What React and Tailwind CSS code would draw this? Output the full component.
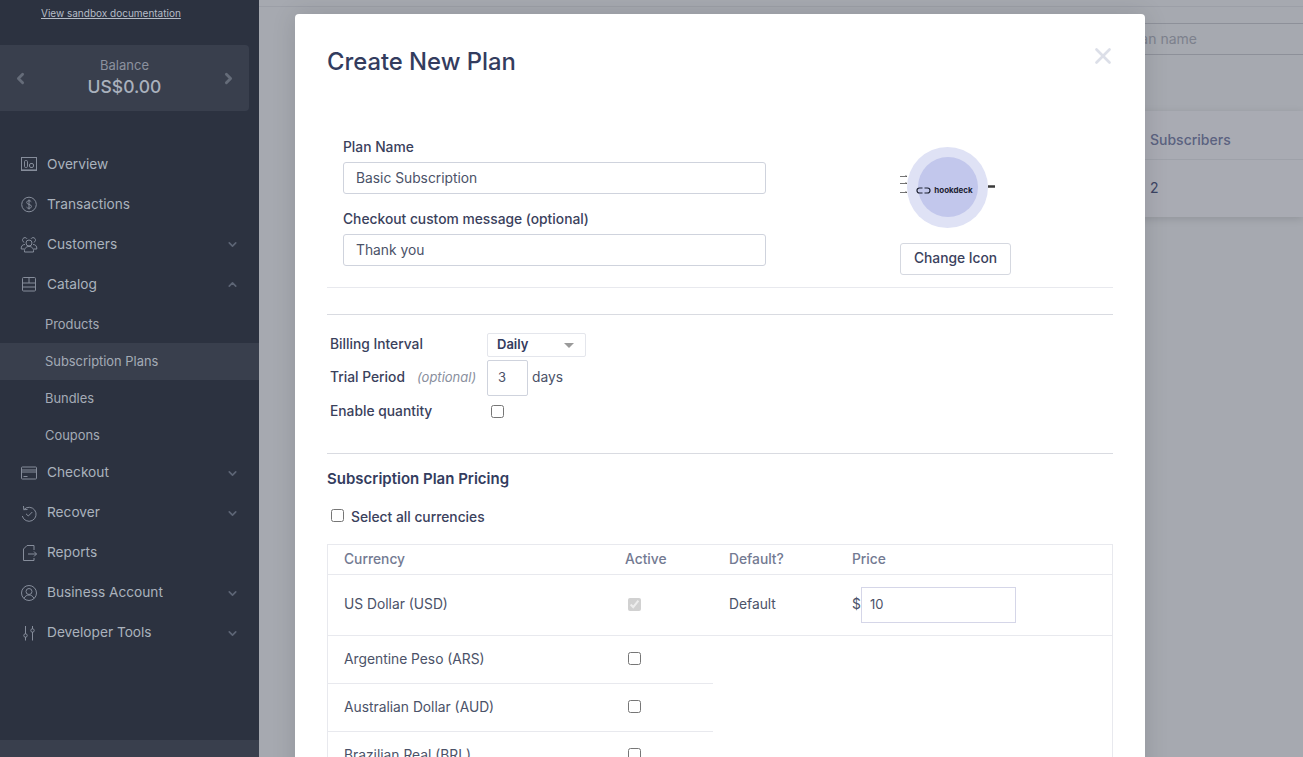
import React from "react";
import { ChevronDown, ChevronUp, ChevronLeft, ChevronRight, X } from "lucide-react";

const iconProps = { width: 18, height: 18, viewBox: "0 0 18 18", fill: "none", stroke: "currentColor", strokeWidth: 1 };

const OverviewIcon = () => (
  <svg {...iconProps}>
    <rect x="1.500" y="2.500" width="15" height="13" />
    <rect x="4.500" y="5.500" width="3" height="7" rx="1.200" />
    <rect x="9.500" y="8.500" width="4" height="4" rx="1.500" />
    <path d="M2 14.500h14" strokeWidth="0.600" />
  </svg>
);
const DollarIcon = () => (
  <svg {...iconProps}>
    <circle cx="9" cy="9.500" r="7.300" />
    <path d="M11.300 6.800C10.800 6 10 5.700 9 5.700c-1.300 0-2.300.7-2.300 1.800 0 2.500 4.700 1.300 4.700 3.900 0 1.100-1 1.900-2.400 1.900-1 0-2-.4-2.500-1.200M9 4.500v10" />
  </svg>
);
const CustomersIcon = () => (
  <svg {...iconProps}>
    <circle cx="9" cy="8" r="3" />
    <path d="M4.500 17c-.5-3.500 1.500-5.500 4.500-5.500s5 2 4.500 5.500z" />
    <path d="M7 3.800a2.400 2.400 0 1 0-2.800 3.500M11 3.800a2.400 2.400 0 1 1 2.800 3.500" />
    <path d="M5 9.500c-2.500 0-4 1.500-3.800 4.500H4M13 9.500c2.500 0 4 1.500 3.800 4.500H14" />
  </svg>
);
const CatalogIcon = () => (
  <svg {...iconProps}>
    <rect x="2.500" y="2.500" width="13" height="13.500" rx="1" />
    <path d="M2.500 8h13M2.500 12h13M9 2.500V8" />
  </svg>
);
const CheckoutIcon = () => (
  <svg {...iconProps}>
    <rect x="1.500" y="3" width="15" height="12" rx="0.800" />
    <path d="M1.500 6h15M1.500 8h15" />
    <path d="M3.500 12.500h4" />
  </svg>
);
const RecoverIcon = () => (
  <svg {...iconProps}>
    <path d="M3.500 2l.3 3.700 3.700-.2" />
    <path d="M3.800 5.700A7 7 0 1 1 2.300 12" />
    <path d="M6 9.800l2.300 2.200 4-4" />
  </svg>
);
const ReportsIcon = () => (
  <svg {...iconProps}>
    <path d="M14 6V1.500H7L3.500 5V16.500H14V14" />
    <path d="M8 10h8.500M14 7.500l2.500 2.500-2.500 2.500" />
  </svg>
);
const AccountIcon = () => (
  <svg {...iconProps}>
    <circle cx="9" cy="9" r="7.500" />
    <circle cx="9" cy="7.500" r="3" />
    <path d="M4 14.500c1-2.500 3-3.500 5-3.500s4 1 5 3.500" />
  </svg>
);
const ToolsIcon = () => (
  <svg {...iconProps}>
    <path d="M5.500 2v8M5.500 13v3.500M12.500 2v3M12.500 8v8.500" />
    <circle cx="5.500" cy="11.500" r="1.700" />
    <circle cx="12.500" cy="6.500" r="1.700" />
  </svg>
);

const navTop = [
  { label: "Overview", icon: <OverviewIcon /> },
  { label: "Transactions", icon: <DollarIcon /> },
  { label: "Customers", icon: <CustomersIcon />, caret: "down" },
  { label: "Catalog", icon: <CatalogIcon />, caret: "up" },
];
const navSub = ["Products", "Subscription Plans", "Bundles", "Coupons"];
const navBottom = [
  { label: "Checkout", icon: <CheckoutIcon />, caret: "down" },
  { label: "Recover", icon: <RecoverIcon />, caret: "down" },
  { label: "Reports", icon: <ReportsIcon /> },
  { label: "Business Account", icon: <AccountIcon />, caret: "down" },
  { label: "Developer Tools", icon: <ToolsIcon />, caret: "down" },
];

function NavItem({ item, nudge }) {
  return (
    <div className="flex items-center h-10 pl-[20px] pr-[20px] text-[13.700px] text-[#aab2bd]">
      <span className="w-[27px] text-[#868d9b] flex items-center">{item.icon}</span>
      <span className={"flex-1 " + (nudge ? "-mt-[1px]" : "")}>{item.label}</span>
      {item.caret === "down" && <ChevronDown size={13} strokeWidth={3} className="text-[#5d6575]" />}
      {item.caret === "up" && <ChevronUp size={13} strokeWidth={3} className="text-[#5d6575]" />}
    </div>
  );
}

function Sidebar() {
  return (
    <aside className="w-[259px] shrink-0 h-full bg-[#2c3240] flex flex-col relative">
      <div className="h-[45px] pl-[41px] pt-[7px] text-[10px] leading-[13px] text-[#b5bcc6]">
        <span className="underline">View sandbox documentation</span>
      </div>
      <div className="w-[249px] h-[66px] bg-[#393f4d] rounded-r flex items-center justify-between pl-[12px] pr-[12px] shrink-0">
        <ChevronLeft size={17} strokeWidth={4} className="text-[#656c79]" />
        <div className="text-center pt-[2px]">
          <div className="text-[13px] leading-[16px] text-[#8b919e]">Balance</div>
          <div className="text-[17.500px] leading-[28px] font-medium text-[#a9b1bd]">US$0.00</div>
        </div>
        <ChevronRight size={17} strokeWidth={4} className="text-[#656c79]" />
      </div>
      <nav className="mt-[33px]">
        {navTop.map((item) => (
          <NavItem key={item.label} item={item} />
        ))}
        <div className="pt-[2px]">
          {navSub.map((label, i) => (
            <div
              key={label}
              className={
                "h-[37px] flex items-center pl-[45px] text-[12.900px] text-[#a4abb6] " +
                (i === 1 ? "bg-[#393f4d]" : "")
              }
            >
              {label}
            </div>
          ))}
        </div>
        <div className="-mt-[1px]">
          {navBottom.map((item) => (
            <NavItem key={item.label} item={item} nudge />
          ))}
        </div>
      </nav>
      <div className="absolute left-0 right-0 bottom-0 h-[17px] bg-[#393f4d]" />
    </aside>
  );
}

function Backdrop() {
  return (
    <div className="flex-1 h-full bg-[#a6a9b0] relative overflow-hidden">
      <div className="h-[7px] border-b border-[#9c9fa7]" />
      <div className="mt-[16px] ml-[780px] h-[32px] border-y border-[#8d9099] flex items-center pl-[89px] pb-[2px] text-[14px] text-[#7d818d]">
        Plan name
      </div>
      <div className="mt-[56px] ml-[780px] h-[106px] bg-[#a9abb3] shadow-[0_2px_8px_rgba(0,0,0,0.12)] text-[14px]">
        <div className="h-[49px] border-b border-[#9ea1a9] pl-[111px] pt-[8px] flex items-center font-medium text-[#5b6280]">
          Subscribers
        </div>
        <div className="h-[56px] pl-[111px] pb-[1px] flex items-center text-[#3c4463]">2</div>
      </div>
    </div>
  );
}

const labelCls = "text-[13.800px] font-medium text-[#3a415c]";
const inputCls = "h-[32px] w-[423px] border border-[#cfd3dd] rounded-[3px] pl-[12px] text-[13.800px] text-[#4b5268] outline-none block";

function HookdeckBadge() {
  return (
    <div className="relative w-[100px] h-[84px] flex items-center justify-center">
      <div className="w-[81px] h-[81px] rounded-full bg-[#dfe2f5] flex items-center justify-center">
        <div className="w-[60px] h-[60px] rounded-full bg-[#c2c7ec] flex items-center justify-center gap-[3px] pr-[6px] pt-[6px]">
          <svg width="15" height="7" viewBox="0 0 15 7" fill="none" stroke="#1d2233" strokeWidth="1.200" className="shrink-0">
            <path d="M6.500 1H3.500a2.500 2.500 0 0 0 0 5H6.500M8.500 1h3a2.500 2.500 0 0 1 0 5h-3" />
          </svg>
          <span className="text-[8px] leading-none font-bold text-[#1d2233]">hookdeck</span>
        </div>
      </div>
      <svg className="absolute left-[2px] top-0" width="100" height="84" viewBox="0 0 100 84" fill="none" stroke="#3a3a3a" strokeWidth="0.700">
        <path d="M0 31.500h7l-1.500-1M0 38.500h7l-1.500-1M0 47.500h7l-1.500-1" />
        <path d="M88 41.500h7" strokeWidth="2.500" />
      </svg>
    </div>
  );
}

function PlanModal() {
  const rows = ["Argentine Peso (ARS)", "Australian Dollar (AUD)", "Brazilian Real (BRL)"];
  return (
    <div className="absolute inset-0 overflow-hidden pl-[295px] pt-[14px]">
      <div className="w-[850px] bg-white rounded-t-[4px] shadow-[0_0_24px_rgba(0,0,0,0.12)] px-[32px] pb-8 relative">
        <h2 className="h-[94px] pt-[32px] text-[23.800px] leading-[32px] font-medium text-[#333c5e]">Create New Plan</h2>
        <X size={26} strokeWidth={2.500} className="absolute right-[29px] top-[29px] text-[#dcdfe8]" />

        <div className="flex h-[180px] border-b border-[#e8e9ee]">
          <div className="pl-[16px] pt-[30px]">
            <div className={labelCls + " h-[24px] leading-[18px]"}>Plan Name</div>
            <input className={inputCls} defaultValue="Basic Subscription" />
            <div className={labelCls + " mt-[16px] h-[24px] leading-[18px]"}>Checkout custom message (optional)</div>
            <input className={inputCls} defaultValue="Thank you" />
          </div>
          <div className="ml-[134px] pt-[37px] flex flex-col items-center">
            <div className="-ml-[16px]">
              <HookdeckBadge />
            </div>
            <button className="mt-[14px] w-[111px] h-[32px] border border-[#d5d8e0] rounded-[3px] pb-[1px] text-[13.800px] font-medium text-[#3a415c]">
              Change Icon
            </button>
          </div>
        </div>

        <div className="h-[139px] mt-[26px] border-t border-[#d9dbe1] pl-[3px] pt-[18px]">
          <div className="flex items-center h-[24px]">
            <span className={labelCls + " w-[157px] -mt-[1px]"}>Billing Interval</span>
            <div className="w-[99px] h-[24px] border border-[#e4e6ec] rounded-[2px] flex items-center justify-between pl-[9px] pr-[11px] text-[13px] font-semibold text-[#333c5e]">
              Daily
              <span className="w-0 h-0 border-x-[5px] border-x-transparent border-t-[5px] border-t-[#9a9a9a]" />
            </div>
          </div>
          <div className="flex items-center h-[36px] mt-[3px]">
            <span className={labelCls + " w-[87px] -mt-[1px]"}>Trial Period</span>
            <span className="w-[70px] -mt-[1px] text-[13px] italic text-[#8a8f9e]">(optional)</span>
            <input className="w-[41px] h-[36px] border border-[#cfd3dd] rounded-[2px] pl-[10px] pb-[2px] text-[13px] text-[#4b5268] outline-none" defaultValue="3" />
            <span className="ml-[4px] -mt-[1px] text-[13.800px] text-[#4b5268]">days</span>
          </div>
          <div className="flex items-center h-[30px]">
            <span className={labelCls + " w-[161px] mt-[1px]"}>Enable quantity</span>
            <input type="checkbox" className="w-[13px] h-[13px]" />
          </div>
        </div>

        <div className="border-t border-[#d9dbe1] pt-[16px]">
          <h3 className="text-[15px] leading-[18px] font-semibold text-[#333c5e]">Subscription Plan Pricing</h3>
          <label className="flex items-center mt-[18px] pl-[4px] h-[20px] text-[13.800px] font-medium text-[#3a415c]">
            <input type="checkbox" className="w-[13px] h-[13px] mr-[7px] -mt-[1px]" />
            <span className="mt-[2px]">Select all currencies</span>
          </label>
        </div>

        <div className="mt-[18px] border border-[#e8e9ee] border-b-0">
          <div className="flex items-center h-[30px] border-b border-[#e8e9ee] text-[13.800px] font-medium text-[#737a92]">
            <span className="w-[297px] pl-[16px]">Currency</span>
            <span className="w-[104px]">Active</span>
            <span className="w-[123px]">Default?</span>
            <span>Price</span>
          </div>
          <div className="flex items-center h-[61px] border-b border-[#e8e9ee] text-[13.800px] text-[#4b5268]">
            <span className="w-[297px] pl-[16px] -mt-[1px]">US Dollar (USD)</span>
            <span className="w-[104px] pl-[3px] flex -mt-[2px]">
              <input type="checkbox" className="w-[13px] h-[13px]" defaultChecked disabled />
            </span>
            <span className="w-[123px] -mt-[1px]">Default</span>
            <span className="w-[9px] -mt-[1px]">$</span>
            <input className="w-[155px] h-[36px] border border-[#d5d6e8] pl-[8px] pb-[1px] text-[13px] outline-none -mt-[1px]" defaultValue="10" />
          </div>
          {rows.map((name) => (
            <div key={name} className="w-[385px] flex items-center h-[48px] border-b border-[#e8e9ee] text-[13.800px] text-[#4b5268]">
              <span className="w-[300px] pl-[16px] -mt-[1px]">{name}</span>
              <input type="checkbox" className="w-[13px] h-[13px] -mt-[2px]" />
            </div>
          ))}
        </div>
      </div>
    </div>
  );
}

export default function App() {
  return (
    <div className="relative flex h-screen overflow-hidden font-['Inter','Liberation_Sans',sans-serif]">
      <Sidebar />
      <Backdrop />
      <PlanModal />
    </div>
  );
}
